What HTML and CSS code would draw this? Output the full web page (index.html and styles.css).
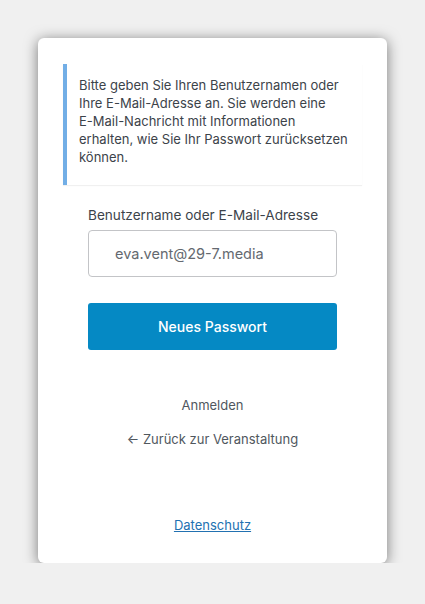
FILE: index.html
```html
<!DOCTYPE html>
<html lang="de">
<head>
<meta charset="utf-8">
<title>Passwort vergessen</title>
<link rel="stylesheet" href="styles.css">
</head>
<body>
<div class="card">
  <div class="notice">
    <p>Bitte geben Sie Ihren Benutzernamen oder Ihre E-Mail-Adresse an. Sie werden eine<br>E-Mail-Nachricht mit Informationen<br>erhalten, wie Sie Ihr Passwort zurücksetzen<br>können.</p>
  </div>
  <form class="form">
    <label class="label" for="user">Benutzername oder E-Mail-Adresse</label>
    <div class="input">eva.vent@29-7.media</div>
    <button class="button" type="button">Neues Passwort</button>
  </form>
  <nav class="links">
    <a class="link">Anmelden</a>
    <a class="link">← Zurück zur Veranstaltung</a>
  </nav>
  <div class="privacy"><a class="privacy-link">Datenschutz</a></div>
</div>
</body>
</html>
```
FILE: styles.css
```css
html, body {
  margin: 0;
  padding: 0;
  background: #f0f0f0;
}
body {
  font-family: Inter, "Noto Sans", sans-serif;
  color: #3c434a;
  padding: 38px 0 0 38px;
}
.card {
  width: 349px;
  height: 525px;
  box-sizing: border-box;
  background: #fff;
  border-radius: 6px;
  box-shadow: 0 2px 14px rgba(0,0,0,0.5);
  padding: 26px 25px 0;
  display: flex;
  flex-direction: column;
}
.notice {
  border-left: 4px solid #72aee6;
  background: #fff;
  box-shadow: 0 1px 1px rgba(0,0,0,0.06);
  padding: 12px 4px 19px 12px;
}
.notice p {
  margin: 0;
  font-size: 13px;
  line-height: 18px;
  color: #3c434a;
}
.form {
  padding: 21px 25px 0;
  display: flex;
  flex-direction: column;
}
.label {
  font-size: 13.6px;
  line-height: 18px;
  color: #3c434a;
}
.input {
  margin-top: 6px;
  height: 47px;
  box-sizing: border-box;
  border: 1px solid #c3c4c7;
  border-radius: 4px;
  padding-left: 26px;
  display: flex;
  align-items: center;
  font-size: 14.5px;
  color: #646970;
}
.button {
  margin-top: 26px;
  height: 47px;
  border: none;
  border-radius: 3px;
  background: #0589c4;
  color: #fff;
  font-family: inherit;
  font-size: 14px;
  font-weight: 500;
}
.links {
  margin-top: 46px;
  display: flex;
  flex-direction: column;
  align-items: center;
  gap: 16px;
}
.link {
  font-size: 13px;
  line-height: 18px;
  color: #50575e;
}
.privacy {
  margin-top: 66px;
  text-align: center;
}
.privacy-link {
  font-size: 13px;
  line-height: 18px;
  color: #2271b1;
  text-decoration: underline;
}
```
